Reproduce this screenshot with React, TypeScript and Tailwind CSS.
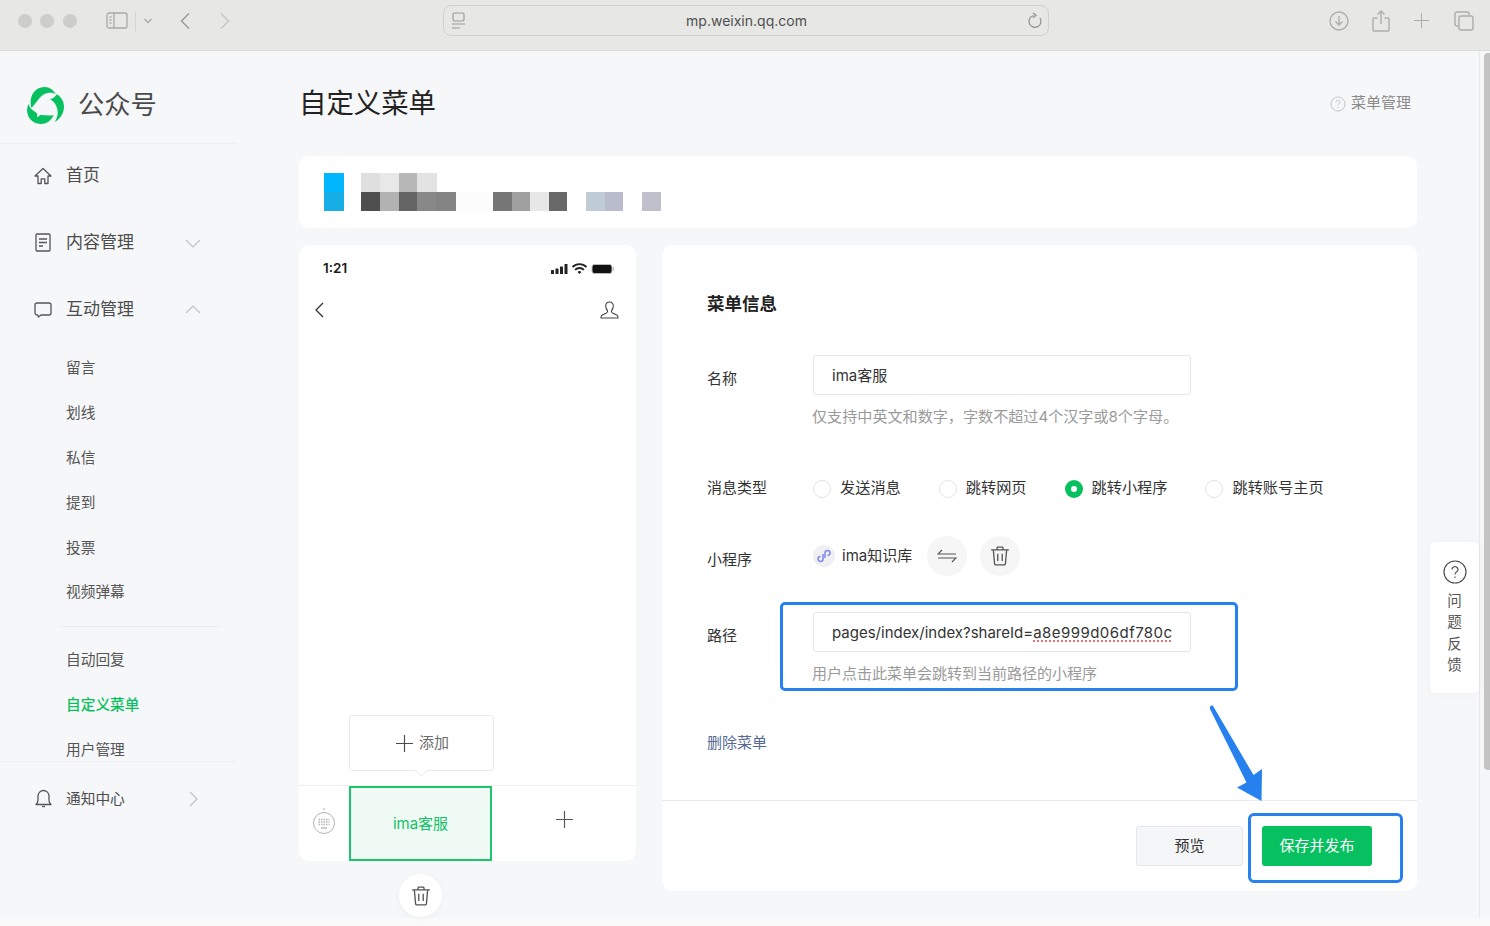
import React from "react";

const Home = () => (
  <svg width="18" height="18" viewBox="0 0 18 18" fill="none" stroke="#555" strokeWidth="1.3" strokeLinejoin="round">
    <path d="M1 9 9 1.5 17 9h-3v7.5h-3.2v-4.6H7.2v4.6H4V9z" />
  </svg>
);
const Doc = () => (
  <svg width="16" height="19" viewBox="0 0 16 19" fill="none" stroke="#555" strokeWidth="1.3">
    <rect x="1" y="1" width="14" height="17" rx="1" />
    <path d="M4 6h8M4 9.5h8M4 13h4" />
  </svg>
);
const Chat = () => (
  <svg width="18" height="16" viewBox="0 0 18 16" fill="none" stroke="#555" strokeWidth="1.3" strokeLinejoin="round">
    <path d="M3 1h12a2 2 0 0 1 2 2v8a2 2 0 0 1-2 2H7l-2.5 2-.8-2H3a2 2 0 0 1-2-2V3a2 2 0 0 1 2-2z" />
  </svg>
);
const Bell = () => (
  <svg width="17" height="19" viewBox="0 0 17 19" fill="none" stroke="#555" strokeWidth="1.3" strokeLinejoin="round">
    <path d="M1 15.5c1.5-1.200 2-2.500 2-4.500V7a5.500 5.500 0 0 1 11 0v4c0 2 .5 3.300 2 4.500H1z" />
    <path d="M7 17.500h3" />
  </svg>
);
const Chevron = ({ d, color = "#c2c2c2" }: { d: string; color?: string }) => (
  <svg width="16" height="16" viewBox="0 0 16 16" fill="none" stroke={color} strokeWidth="1.200">
    <path d={d} />
  </svg>
);
const Trash = ({ size = 18, color = "#555" }: { size?: number; color?: string }) => (
  <svg width={size} height={size} viewBox="0 0 18 18" fill="none" stroke={color} strokeWidth="1.200" strokeLinejoin="round">
    <path d="M1 3.500h16M6 3.500 6.600 1h4.800l.6 2.500M3 3.500l1.100 12.300c.1.700.5 1.200 1.200 1.200h7.400c.7 0 1.100-.5 1.200-1.200L15 3.500M7 7v6.500M11 7v6.500" />
  </svg>
);
const Plus = ({ size, color = "#555" }: { size: number; color?: string }) => (
  <svg width={size} height={size} viewBox="0 0 18 18" fill="none" stroke={color} strokeWidth="1.200">
    <path d="M9 0v18M0 9h18" />
  </svg>
);

const Logo = () => (
  <svg width="37" height="37" viewBox="0 0 36 36" fill="#07c160">
    <path d="M4.500 20.500C3.200 17 3 13 4.500 9 6.500 3.500 11 .2 17 0c4.500-.1 8.500 2.500 11 7-2-1-4-1.500-6.500-1.300-3.500.3-6.500 2-9 4.800-2.500 2.800-4.500 6-8 10z" />
    <path d="M29 7c4.300 2.500 7 7 7 12 0 6.500-3.500 12-9 15 2.500-3.500 3.500-8 2.500-12.500-.9-4-3.500-7.500-7-9.500 2.800-.8 5-2.500 6.500-5z" />
    <path d="M1.500 16.500c1 3.500 3.200 6 6.300 7.500 1 .5 1.700 1.200 2 2.300.2.800.2 1.900 0 3.400l3.500-2.600c2.700.6 8 .7 12.700.4-2.500 5-6.500 8.200-12 8.500C7 36 1.200 31.500.2 24.500c-.4-2.800.2-5.500 1.300-8z" />
  </svg>
);

const NavRow = ({ icon, label, chev, h }: { icon: React.ReactNode; label: string; chev?: React.ReactNode; h: string }) => (
  <div className={`flex items-center pl-[34px] ${h}`}>
    <span className="flex w-[18px] justify-center">{icon}</span>
    <span className="ml-[14px] w-[119px] text-[17px] text-[#4c4c4c]">{label}</span>
    {chev}
  </div>
);

const SubRow = ({ label, active }: { label: string; active?: boolean }) => (
  <div className={`flex h-[44.800px] items-center pl-[66px] text-[14.700px] ${active ? "font-medium text-[#07c160]" : "text-[#555]"}`}>{label}</div>
);

const Radio = ({ label, on }: { label: string; on?: boolean }) => (
  <div className="flex items-center gap-[9px]">
    {on ? (
      <span className="flex h-[18px] w-[18px] items-center justify-center rounded-full bg-[#07c160]">
        <span className="h-[6px] w-[6px] rounded-full bg-white" />
      </span>
    ) : (
      <span className="h-[18px] w-[18px] rounded-full border border-[#e4e4e4] bg-white" />
    )}
    <span className="text-[15.200px] text-[#333]">{label}</span>
  </div>
);

const Banner = () => (
  <svg width="345" height="40" viewBox="0 0 345 40" shapeRendering="crispEdges">
    <rect x="0" y="0" width="20" height="19" fill="#00b6ff" />
    <rect x="0" y="19" width="20" height="19" fill="#17aee6" />
    <rect x="37" y="0" width="19" height="19" fill="#dfdfdf" />
    <rect x="56" y="0" width="19" height="19" fill="#e8e8e8" />
    <rect x="75" y="0" width="18" height="19" fill="#b7b7b7" />
    <rect x="93" y="0" width="20" height="19" fill="#e3e3e3" />
    <rect x="37" y="19" width="19" height="19" fill="#4f4f4f" />
    <rect x="56" y="19" width="19" height="19" fill="#b2b2b2" />
    <rect x="75" y="19" width="18" height="19" fill="#646464" />
    <rect x="93" y="19" width="19" height="19" fill="#888888" />
    <rect x="112" y="19" width="20" height="19" fill="#848484" />
    <rect x="132" y="19" width="37" height="19" fill="#fcfcfc" />
    <rect x="169" y="19" width="19" height="19" fill="#777777" />
    <rect x="188" y="19" width="18" height="19" fill="#a0a0a0" />
    <rect x="206" y="19" width="19" height="19" fill="#e7e7e7" />
    <rect x="225" y="19" width="18" height="19" fill="#686868" />
    <rect x="262" y="19" width="19" height="19" fill="#bfcbd5" />
    <rect x="281" y="19" width="18" height="19" fill="#b8bccd" />
    <rect x="318" y="19" width="19" height="19" fill="#bfc0cc" />
  </svg>
);

export default function App() {
  return (
    <div className="relative flex h-[926px] w-[1490px] flex-col overflow-hidden bg-[#f6f7f9] font-['Inter','Noto_Sans_CJK_SC',sans-serif]">
      {/* Browser toolbar */}
      <div className="flex h-[51px] shrink-0 items-start border-b border-[#dcdcda] bg-[#e7e7e5] pl-[18px] pt-[5px]">
        <div className="flex h-[31px] items-center">
          <span className="h-[14px] w-[14px] rounded-full bg-[#cdcdcb]" />
          <span className="ml-[8px] h-[14px] w-[14px] rounded-full bg-[#cdcdcb]" />
          <span className="ml-[9px] h-[14px] w-[14px] rounded-full bg-[#cdcdcb]" />
          <svg className="ml-[29px]" width="22" height="17" viewBox="0 0 22 17" fill="none" stroke="#a9a9a7" strokeWidth="1.300">
            <rect x="1" y="1" width="20" height="15" rx="2" />
            <path d="M8 1v15" />
            <path d="M3.500 5h2M3.500 8h2M3.500 11h2" />
          </svg>
          <span className="ml-[7px] h-[20px] w-px bg-[#d4d4d2]" />
          <svg className="ml-[7px]" width="10" height="8" viewBox="0 0 10 8" fill="none" stroke="#a9a9a7" strokeWidth="1.500">
            <path d="M1.500 2 5 5.500 8.500 2" />
          </svg>
          <svg className="ml-[26px]" width="12" height="18" viewBox="0 0 12 18" fill="none" stroke="#9a9a98" strokeWidth="1.500">
            <path d="M10 1.500 2.500 9l7.500 7.500" />
          </svg>
          <svg className="ml-[28px]" width="12" height="18" viewBox="0 0 12 18" fill="none" stroke="#c6c6c4" strokeWidth="1.500">
            <path d="M2 1.500 9.500 9 2 16.500" />
          </svg>
        </div>
        <div className="ml-[212px] flex h-[31px] w-[606px] items-center rounded-[8px] border border-[#d0d0ce] pl-[7px] pr-[5px]">
          <svg width="15" height="18" viewBox="0 0 15 18" fill="none" stroke="#9a9a98" strokeWidth="1.200">
            <rect x="2" y="1" width="11" height="8" rx="1.500" />
            <path d="M1 12h13M1 16h8" />
          </svg>
          <span className="flex-1 text-center text-[14px] text-[#4f4f4f]">mp.weixin.qq.com</span>
          <svg width="16" height="18" viewBox="0 0 16 18" fill="none" stroke="#8f8f8d" strokeWidth="1.200">
            <path d="M6.500 3.500a6 6 0 1 0 6.500 2.500M6 .8l3 2.700-3 2" />
          </svg>
        </div>
        <div className="flex h-[31px] items-center">
          <svg className="ml-[280px]" width="20" height="20" viewBox="0 0 20 20" fill="none" stroke="#adadab" strokeWidth="1.400">
            <circle cx="10" cy="10" r="9" />
            <path d="M10 5v9M6.500 10.500 10 14l3.500-3.500" />
          </svg>
          <svg className="ml-[23px]" width="18" height="22" viewBox="0 0 18 22" fill="none" stroke="#adadab" strokeWidth="1.400">
            <path d="M5.500 8H2a1 1 0 0 0-1 1v11a1 1 0 0 0 1 1h14a1 1 0 0 0 1-1V9a1 1 0 0 0-1-1h-3.500M9 14V1M5.500 4.500 9 1l3.500 3.500" />
          </svg>
          <span className="ml-[24px]"><Plus size={15} color="#adadab" /></span>
          <svg className="ml-[25px]" width="20" height="20" viewBox="0 0 20 20" fill="none" stroke="#adadab" strokeWidth="1.400">
            <path d="M4 15H3a2 2 0 0 1-2-2V3a2 2 0 0 1 2-2h10a2 2 0 0 1 2 2v1" />
            <rect x="5" y="5" width="14" height="14" rx="2" />
          </svg>
        </div>
      </div>

      {/* Page body */}
      <div className="relative flex h-[867px] shrink-0">
        {/* Sidebar */}
        <aside className="flex w-[237px] shrink-0 flex-col">
          <div className="flex h-[93px] shrink-0 items-center border-b border-[#eeeff1] pl-[27px] pt-[16px]">
            <Logo />
            <span className="ml-[14px] text-[26.300px] text-[#4a4a4a]">公众号</span>
          </div>
          <NavRow h="h-[63px]" icon={<Home />} label="首页" />
          <div className="mt-[2px]">
            <NavRow h="h-[67px]" icon={<Doc />} label="内容管理" chev={<Chevron d="M1 5l7 7 7-7" />} />
            <NavRow h="h-[67px]" icon={<Chat />} label="互动管理" chev={<Chevron d="M1 11l7-7 7 7" />} />
          </div>
          <div className="mt-[3px]">
            <SubRow label="留言" />
            <SubRow label="划线" />
            <SubRow label="私信" />
            <SubRow label="提到" />
            <SubRow label="投票" />
            <SubRow label="视频弹幕" />
          </div>
          <div className="ml-[60px] mt-[11px] h-px w-[160px] bg-[#ebecee]" />
          <div className="mt-[11px] h-[123px]">
            <SubRow label="自动回复" />
            <SubRow label="自定义菜单" active />
            <SubRow label="用户管理" />
          </div>
          <div className="flex h-[75px] items-center border-t border-[#eeeff1] pl-[34px]">
            <span className="flex w-[18px] justify-center"><Bell /></span>
            <span className="ml-[14px] w-[119px] text-[14.700px] text-[#4c4c4c]">通知中心</span>
            <Chevron d="M5 1l7 7-7 7" />
          </div>
        </aside>

        {/* Main */}
        <main className="ml-[62px] flex w-[1118px] shrink-0 flex-col">
          <div className="flex h-[105px] shrink-0 items-center justify-between pr-[6px]">
            <h1 className="text-[27.400px] font-normal leading-none text-[#222]">自定义菜单</h1>
            <div className="flex items-center gap-[5px] text-[15px] text-[#8b8b8b]">
              <svg width="16" height="16" viewBox="0 0 16 16" fill="none" stroke="#c4c4c4" strokeWidth="1">
                <circle cx="8" cy="8" r="7" />
                <path d="M6 6.200a2 2 0 1 1 3 1.700c-.7.400-1 .8-1 1.600M8 11v1" />
              </svg>
              菜单管理
            </div>
          </div>
          <div className="flex h-[72px] shrink-0 items-center rounded-[10px] bg-white pl-[25px] pt-[2px]">
            <Banner />
          </div>

          <div className="mt-[17px] flex gap-[26px]">
            {/* Phone column */}
            <div className="flex w-[337px] shrink-0 flex-col">
              <div className="flex h-[616px] flex-col rounded-[10px] bg-white">
                <div className="flex h-[47px] items-center justify-between pl-[24px] pr-[22px]">
                  <span className="text-[13.500px] font-semibold text-[#1a1a1a]">1:21</span>
                  <svg width="63" height="12" viewBox="0 0 63 12">
                    <rect x="0" y="7" width="3" height="4" rx=".5" fill="#222" />
                    <rect x="4.500" y="5.500" width="3" height="5.500" rx=".5" fill="#222" />
                    <rect x="9" y="3.500" width="3" height="7.500" rx=".5" fill="#222" />
                    <rect x="13.500" y="1" width="3" height="10" rx=".5" fill="#222" />
                    <path d="M21.500 4a10 10 0 0 1 14 0M24 6.800a6.500 6.500 0 0 1 9 0" fill="none" stroke="#222" strokeWidth="1.800" />
                    <path d="M26.500 9a3 3 0 0 1 4 0l-2 2z" fill="#222" />
                    <rect x="41" y="1.500" width="20" height="9" rx="2.500" fill="#111" stroke="#bbb" strokeWidth="1" />
                    <rect x="62" y="4.500" width="1" height="3" fill="#bbb" />
                  </svg>
                </div>
                <div className="flex h-[34px] items-center justify-between pl-[15px] pr-[17px] pt-[2px]">
                  <svg width="10" height="16" viewBox="0 0 10 16" fill="none" stroke="#333" strokeWidth="1.300">
                    <path d="M9 1 2 8l7 7" />
                  </svg>
                  <svg width="19" height="18" viewBox="0 0 19 18" fill="none" stroke="#444" strokeWidth="1.100" strokeLinejoin="round">
                    <path d="M9.500 1C7 1 5.700 3 5.700 5.200c0 2 1 3.500 1.800 4.300.3.900 0 1.800-1 2.400L1.800 14.300c-.6.400-.8 1-.8 2.700h17c0-1.700-.2-2.300-.8-2.700l-4.700-2.400c-1-.6-1.300-1.500-1-2.400.8-.8 1.800-2.300 1.800-4.300C13.300 3 12 1 9.500 1z" />
                  </svg>
                </div>
                <div className="flex-1" />
                <div className="relative ml-[50px] flex h-[56px] w-[145px] items-center justify-center gap-[6px] rounded-[3px] border border-[#ebebeb] bg-white pl-[2px]">
                  <Plus size={17} color="#4a4a4a" />
                  <span className="text-[15px] text-[#6b6b6b]">添加</span>
                  <span className="absolute -bottom-[5px] left-[67px] h-[9px] w-[9px] rotate-45 border-b border-r border-[#ebebeb] bg-white" />
                </div>
                <div className="mt-[14px] flex h-[76px] shrink-0 border-t border-[#eeeeee]">
                  <div className="flex w-[50px] items-center justify-center pb-[3px]">
                    <svg width="24" height="30" viewBox="0 0 24 30" fill="none" stroke="#b5b5b5" strokeWidth="1">
                      <path d="M10.500 2.500 12 .8l1.500 1.700z" fill="#b5b5b5" stroke="none" />
                      <circle cx="12" cy="16" r="10.500" />
                      <path d="M6.500 12.500h11M6.500 15h11M6.500 17.500h11" strokeDasharray="1.500 1" strokeWidth="1.300" />
                      <path d="M9 21h6" strokeWidth="1.400" />
                    </svg>
                  </div>
                  <div className="flex h-[75px] w-[143px] items-center justify-center border-2 border-[#1fc46e] bg-[#f0faf5] pt-[1px] text-[15px] text-[#10c265]">ima客服</div>
                  <div className="flex flex-1 items-center justify-center pb-[8px]">
                    <Plus size={17} color="#555" />
                  </div>
                </div>
              </div>
              <div className="ml-[100px] mt-[13px] flex h-[43px] w-[43px] items-center justify-center rounded-full bg-white shadow-[0_1px_6px_rgba(0,0,0,0.04)]">
                <Trash size={20} color="#555" />
              </div>
            </div>

            {/* Form */}
            <div className="flex h-[646px] flex-1 flex-col rounded-[10px] bg-white">
              <div className="h-[555px] pl-[45px]">
                <div className="mt-[47px] h-[24px] text-[17.500px] font-semibold leading-[24px] text-[#222]">菜单信息</div>
                <div className="mt-[39px] flex">
                  <span className="w-[106px] pt-[13px] text-[15px] leading-[22px] text-[#333]">名称</span>
                  <div className="flex h-[40px] w-[378px] items-center rounded-[3px] border border-[#e6e6e6] pl-[18px] pt-[2px] text-[15px] text-[#333]">ima客服</div>
                </div>
                <div className="ml-[105px] mt-[11px] h-[22px] text-[15.100px] leading-[22px] text-[#9a9a9a]">仅支持中英文和数字，字数不超过4个汉字或8个字母。</div>
                <div className="mt-[50.500px] flex h-[20px] items-center">
                  <span className="w-[106px] text-[15px] text-[#333]">消息类型</span>
                  <div className="flex gap-[38px]">
                    <Radio label="发送消息" />
                    <Radio label="跳转网页" />
                    <Radio label="跳转小程序" on />
                    <Radio label="跳转账号主页" />
                  </div>
                </div>
                <div className="mt-[37.500px] flex h-[40px] items-center">
                  <span className="w-[106px] pt-[8px] text-[15px] text-[#333]">小程序</span>
                  <span className="flex h-[22px] w-[22px] items-center justify-center rounded-full bg-[#f0f0f3]">
                    <svg width="14" height="14" viewBox="0 0 14 14" fill="none" stroke="#7f86ee" strokeWidth="1.500">
                      <path d="M6 5v5a2.500 2.500 0 1 1-2.500-2.500M8 9V4a2.500 2.500 0 1 1 2.500 2.500" />
                    </svg>
                  </span>
                  <span className="ml-[7px] w-[85px] text-[15px] text-[#333]">ima知识库</span>
                  <span className="flex h-[40px] w-[40px] items-center justify-center rounded-full bg-[#f6f6f6]">
                    <svg width="20" height="14" viewBox="0 0 20 14" fill="none" stroke="#555" strokeWidth="1.200">
                      <path d="M5 1 1 5h18M15 13l4-4H1" />
                    </svg>
                  </span>
                  <span className="ml-[13px] flex h-[40px] w-[40px] items-center justify-center rounded-full bg-[#f6f6f6]">
                    <Trash size={20} color="#555" />
                  </span>
                </div>
                <div className="mt-[36px] flex">
                  <span className="w-[106px] pt-[13px] text-[15px] leading-[22px] text-[#333]">路径</span>
                  <div className="flex h-[40px] w-[378px] items-center rounded-[3px] border border-[#e6e6e6] pl-[18px] pt-[2px] text-[15px] text-[#333]">
                    <span className="whitespace-nowrap">
                      pages/index/index?shareId=<span className="tracking-[0.45px] underline decoration-[#e0474c] decoration-dotted underline-offset-[3px]">a8e999d06df780c</span>
                    </span>
                  </div>
                </div>
                <div className="ml-[105px] mt-[11px] h-[22px] text-[15px] leading-[22px] text-[#9a9a9a]">用户点击此菜单会跳转到当前路径的小程序</div>
                <div className="mt-[47px] h-[22px] text-[15px] leading-[22px] text-[#576b95]">删除菜单</div>
              </div>
              <div className="flex h-[91px] shrink-0 items-start justify-end border-t border-[#eaeaea] pr-[45px] pt-[25px]">
                <div className="flex h-[40px] w-[107px] items-center justify-center rounded-[3px] border border-[#e6e7e9] bg-[#f5f6f8] text-[15px] text-[#333]">预览</div>
                <div className="ml-[19px] flex h-[40px] w-[110px] items-center justify-center rounded-[3px] bg-[#07c160] text-[15px] text-white">保存并发布</div>
              </div>
            </div>
          </div>
        </main>

        {/* Scrollbar */}
        <div className="ml-auto flex h-full w-[11px] shrink-0 justify-end border-l border-[#e9e9ea] pt-[2px]">
          <div className="h-[717px] w-[6px] rounded-l-[4px] bg-[#c4c4c4]" />
        </div>

        {/* Feedback floating panel */}
        <div className="absolute left-[1430px] top-[491px] flex h-[151px] w-[49px] flex-col items-center rounded-[5px] bg-white pt-[18px] text-[14.500px] leading-[21.300px] text-[#555] shadow-[0_0_8px_rgba(0,0,0,0.04)]">
          <svg className="mb-[6px]" width="24" height="24" viewBox="0 0 24 24" fill="none" stroke="#444" strokeWidth="1.100">
            <circle cx="12" cy="12" r="11" />
            <path d="M9 9.500a3 3 0 1 1 4.500 2.600c-1 .6-1.500 1.200-1.500 2.400M12 16.500v1.500" />
          </svg>
          <span>问</span>
          <span>题</span>
          <span>反</span>
          <span>馈</span>
        </div>

        {/* Annotation overlays */}
        <div className="pointer-events-none absolute left-[780px] top-[551px] h-[89px] w-[458px] rounded-[5px] border-[3px] border-[#2680ee]" />
        <div className="pointer-events-none absolute left-[1248px] top-[762px] h-[70px] w-[155px] rounded-[6px] border-[3px] border-[#2680ee]" />
        <svg className="pointer-events-none absolute left-[1205px] top-[650px]" width="65" height="105" viewBox="0 0 65 105" fill="#2680ee">
          <path d="M5 5.500c1-1.500 3-1 3.500.3L48.500 74l8.500-6-.5 32-24.500-13.500 9.500-5L5 8z" />
        </svg>
      </div>

      {/* Bottom strip */}
      <div className="h-[8px] flex-1 bg-[#fafafb]" />
    </div>
  );
}
